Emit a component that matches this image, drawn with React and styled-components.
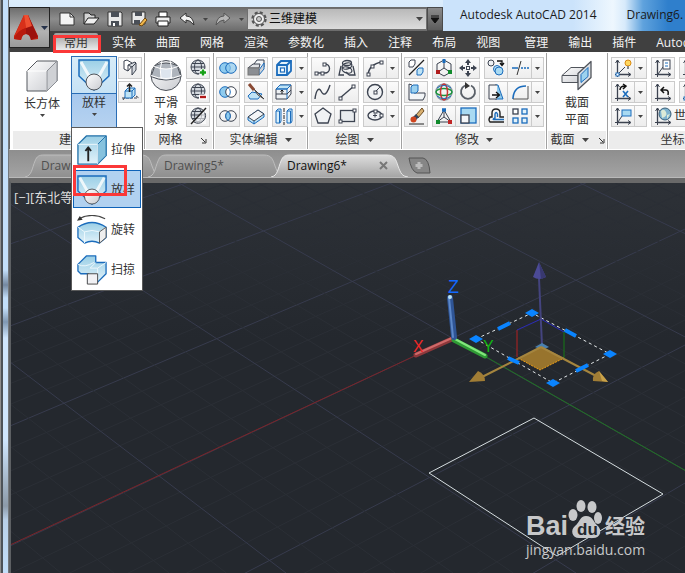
import React, { useState } from 'react'
import styled, { createGlobalStyle } from 'styled-components'

const GlobalStyle = createGlobalStyle`
* { box-sizing: border-box; }
body {
  margin: 0;
  overflow: hidden;
  font-family: "Open Sans", "Noto Sans CJK SC", sans-serif;
  font-size: 12px;
  line-height: 16px;
  color: #333;
}
button, select {
  font: inherit;
  color: inherit;
  margin: 0;
  padding: 0;
  border: 0;
  background: none;
}
svg { display: block; }
`;

const Window = styled.div`
  min-height: 100vh;
  display: flex;
  flex-direction: column;
  padding-left: 9px;
  overflow: hidden;
  background:
    linear-gradient(90deg, #8d8d8d 0 1px, #4c5258 1px 3px, transparent 3px 8px, #74787c 8px) 0 0 / 9px 100% no-repeat,
    linear-gradient(#c3dffa 0 270px, #7488a0 285px, #c3dffa 298px, #c3dffa 308px, #8098b2 322px, #cfe6fd 338px, #cfe6fd 440px, #8c9aa9 506px, #b9d0e8 520px, #c3dffa 100%);
`;

const TopArea = styled.header`
  display: flex;
  flex-direction: column;
  background: linear-gradient(#dcedfc 0, #cbe3fb 31px, #cbe3fb 31px);
  position: relative;
`;

const TitleRow = styled.div`
  display: flex;
  height: 31px;
  padding-top: 7px;
  padding-left: 41px;
`;

const AppButton = styled.button`
  position: absolute;
  left: 0;
  top: 7px;
  width: 41px;
  height: 41px;
  border: 1px solid #222;
  background: linear-gradient(#6e6e6e, #b2b2b2 60%, #9a9a9a);
  display: flex;
  align-items: center;
  gap: 2px;
  padding-left: 4px;
  z-index: 2;
`;

const QuickBar = styled.div`
  display: flex;
  flex: none;
  align-items: center;
  height: 24px;
  padding-left: 5px;
  background: linear-gradient(#6a6a6a, #8d8d8d 50%, #6b6b6b);
`;

const QuickButton = styled.button`
  width: ${p => p.$narrow ? 12 : 24}px;
  height: 22px;
  display: flex;
  align-items: center;
  justify-content: center;
`;

const Workspace = styled.label`
  display: flex;
  align-items: center;
  width: 180px;
  height: 22px;
  padding: 0 3px 0 3px;
  gap: 2px;
  border: 1px solid #707070;
  background: linear-gradient(#b9b9b9, #dcdcdc);
  color: #111;

  select {
    flex: 1;
    appearance: none;
    outline: none;
    height: 20px;
  }
`;

const MoreButton = styled.button`
  width: 16px;
  height: 24px;
  display: flex;
  align-items: center;
  justify-content: center;
  border: 1px solid #4a4a4a;
  background: linear-gradient(#8a8a8a, #5c5c5c);
`;

const Caption = styled.div`
  flex: 1;
  display: flex;
  gap: 30px;
  height: 31px;
  margin-top: -7px;
  padding: 7px 0 0 17px;
  white-space: nowrap;
  overflow: hidden;
  color: #1b1b1b;
  background: linear-gradient(90deg, #cbe3fb 0 130px, #eef7fe 170px, #d7eafb 182px, #5fa2dd 200px, #2f7fcc 225px);
`;

const TabRow = styled.nav`
  display: flex;
  align-items: flex-end;
  height: 21px;
  padding-left: 45px;
  background: #404040;
  white-space: nowrap;
`;

const RibbonTab = styled.button`
  position: relative;
  flex: none;
  height: 19px;
  padding: 0 10px;
  margin-right: ${p => p.$last ? 4 : 0}px;
  border-radius: 2px 2px 0 0;
  color: ${p => p.$active ? '#333' : '#f4f4f4'};
  background: ${p => p.$active ? 'linear-gradient(#9c9c9c, #f4f4f4)' : 'none'};
`;

const Mark = styled.span`
  position: absolute;
  border: 3px solid #fb3838;
  pointer-events: none;
  top: ${p => p.$menu ? -6 : 2}px;
  left: -1px;
  right: ${p => p.$menu ? 13 : -3}px;
  height: ${p => p.$menu ? 31 : 18}px;
`;

const Ribbon = styled.div`
  display: flex;
  padding-left: 2px;
  background: #fff;
  border-left: 1px solid #666;
  border-bottom: 1px solid #fff;
`;

const PanelBox = styled.section`
  display: flex;
  flex-direction: column;
  flex: ${p => p.$grow ? '1 0 auto' : 'none'};
  width: ${p => p.$w}px;
  margin-top: 1px;
  border-right: 1px solid #a2a2a2;
`;

const PanelBody = styled.div`
  display: flex;
  align-items: flex-start;
  gap: ${p => p.$gap || 0}px;
  height: 78px;
  padding: 4px 0 0 ${p => p.$pad || 0}px;
`;

const PanelLabel = styled.div`
  display: flex;
  align-items: center;
  justify-content: center;
  gap: 7px;
  height: 18px;
  margin: 0 1px;
  padding-left: ${p => p.$indent || 0}px;
  white-space: nowrap;
  background: #ececec;
`;

const Launcher = styled.button`
  width: 8px;
  height: 8px;
  margin-left: ${p => p.$far ? 10 : 2}px;
`;

const BigButton = styled.button`
  display: flex;
  flex-direction: column;
  align-items: center;
  width: ${p => p.$w || 46}px;
  height: 71px;
  line-height: 17px;
  gap: 2px;
  padding-top: 2px;
`;

const LoftAnchor = styled.div`
  position: relative;
  width: 46px;
  margin-top: -1px;
`;

const LoftButton = styled(BigButton)`
  height: 73px;
  padding-top: 1px;
  border: 1px solid #2a6db5;
  border-bottom: 0;
  background: linear-gradient(#d7ecf8 0, #c6e2f5 36px, #2a6db5 36px, #2a6db5 37px, #a6c8ee 37px, #b7d3f0);
`;

const Menu = styled.div`
  position: absolute;
  z-index: 5;
  top: 71px;
  left: 0;
  width: 72px;
  display: flex;
  flex-direction: column;
  gap: 2px;
  padding: 2px 1px;
  background: #fff;
  border: 1px solid #5a5a5a;
`;

const MenuItem = styled.button`
  position: relative;
  display: flex;
  align-items: center;
  height: 38px;
  padding: 1px 0 0 3px;
  gap: 4px;
  white-space: nowrap;
  border: 1px solid ${p => p.$active ? '#0e62b8' : 'transparent'};
  background: ${p => p.$active ? '#b1d1f0' : 'none'};
`;

const Column = styled.div`
  display: flex;
  flex-direction: column;
  gap: 2px;
`;

const PanelRow = styled.div`
  display: flex;
  gap: 4px;
`;

const Group = styled.div`
  display: flex;
  height: 22px;
  border: 1px solid #cbcbcb;
  background: linear-gradient(#fbfbfb, #ededed);
`;

const toolWidth = (p) => {
  if (p.$drop) return 12
  return p.$divided ? 24 : 22
}

const Tool = styled.button`
  display: flex;
  flex: none;
  align-items: center;
  justify-content: center;
  width: ${toolWidth}px;
  height: 20px;
  border-left: ${p => p.$divided ? '1px solid #cbcbcb' : '0'};
`;

const WorldTool = styled.button`
  display: flex;
  flex: none;
  align-items: center;
  width: 90px;
  height: 20px;
`;

const FileTabs = styled.div`
  display: flex;
  align-items: flex-end;
  height: 28px;
  padding-left: 16px;
  background: linear-gradient(#8e8e8e, #a3a3a3);
  border-bottom: 1px solid #b9b9b9;
`;

const FileTab = styled.div`
  position: relative;
  flex: none;
  display: flex;
  align-items: center;
  justify-content: space-between;
  width: 137px;
  height: 23px;
  margin-right: -14px;
  padding: 0 20px 0 16px;
  z-index: ${p => p.$active ? 1 : 0};
  color: ${p => p.$active ? '#111' : '#505050'};

  > svg:first-child { position: absolute; inset: 0; }
  button { position: relative; }
`;

const FileName = styled.span`
  position: relative;
`;

const NewTab = styled.button`
  margin: 0 0 3px 14px;
`;

const Viewport = styled.main`
  position: relative;
  flex: 1;
  min-height: 390px;
  border-top: 5px solid #696969;
  border-left: 2px solid #5d6063;
  background: linear-gradient(#2d3137, #24282e 40%, #24282e);
  overflow: hidden;
`;

const Scene = styled.svg`
  position: absolute;
  inset: 0;
  width: 100%;
  height: 100%;
`;

const ViewLabel = styled.button`
  position: relative;
  padding: 6px 3px;
  color: #dcdcdc;
  font-size: 13px;
`;

const Watermark = styled.div`
  position: absolute;
  right: 35px;
  bottom: 13px;
  width: 124px;
  color: #c7c8ca;
`;

const Brand = styled.div`
  display: flex;
  align-items: flex-end;
  font: bold 27px/28px "Liberation Sans", sans-serif;

  b {
    font: bold 20px/28px "Noto Sans CJK SC", sans-serif;
    margin-left: 3px;
  }
`;

const Site = styled.div`
  font: 14px/20px "Open Sans", sans-serif;
`;

const D = '#3c4350'
const B = '#1b6cbc'
const L = '#bfe3f5'

const Arrow = ({ c = '#444' }) => (
  <svg width="7" height="4"><path d="M0 0H7L3.5 4Z" fill={c} /></svg>
)

const ToolArrow = () => (
  <svg width="5" height="3"><path d="M0 0H5L2.5 3Z" fill="#444" /></svg>
)

const Node = ({ x, y, c = D }) => <rect x={x - 1} y={y - 1} width="3" height="3" fill="#fff" stroke={c} />

const Globe = () => (
  <g fill="none" stroke={D}>
    <circle cx="11" cy="9" r="7" fill="#d5dae0" />
    <path d="M4 9H18M5 5.500H17M5 12.500H17" />
    <ellipse cx="11" cy="9" rx="3.500" ry="7" />
  </g>
)

const Axes = () => (
  <g stroke={D} fill="none">
    <path d="M5.500 2V16.500H18" strokeWidth="1.300" />
    <path d="M3.500 5L5.500 2L7.500 5M16 14.500L19 16.500L16 18.500M3 16.500H5.500V19" />
  </g>
)

const icons = {
  polysolid: <g stroke={D} fill="#d5d9de" strokeLinejoin="round"><path d="M5 3L8 2L13 5V8L9 13L5 11Z" fill="#fff" /><path d="M9 7L16 4L17 5V12L13 17V9Z" /><path d="M13 9L17 5M9 7V13" /></g>,
  press: <g><path d="M3 16H19M17 14L20 16M4 18L8 12" stroke={D} strokeDasharray="3 1" /><path d="M6 9L9 6H16V13L13 16H6Z" fill={L} stroke={B} /><path d="M6 9H13V16M13 9L16 6" stroke={B} fill="none" /><path d="M10.500 10V2M8 4.500L10.500 2L13 4.500" stroke="#222" strokeWidth="1.500" fill="none" /></g>,
  meshPlus: <g><Globe /><path d="M12.500 14.500H19.500M16 11V18" stroke="#fff" strokeWidth="5" /><path d="M13 14.500H19M16 11.500V17.500" stroke="#16a016" strokeWidth="2.400" /></g>,
  meshMinus: <g><Globe /><path d="M12 15H20" stroke="#fff" strokeWidth="5" /><path d="M13 15H19" stroke="#b01818" strokeWidth="2.400" /></g>,
  meshCut: <g><Globe /><path d="M4 18L19 2V18Z" fill="#fff" opacity=".6" /><path d="M18 7A7.500 7.500 0 0 1 7 16" stroke={D} fill="none" /><path d="M4 18L19 2" stroke="#222" strokeWidth="1.400" /></g>,
  union: <g stroke={B} fill="#8fcbee"><circle cx="8" cy="10" r="5.300" /><circle cx="14" cy="10" r="5.300" fillOpacity=".7" /></g>,
  subtract: <g><circle cx="8" cy="10" r="5.300" fill="#8fcbee" stroke={B} /><circle cx="14" cy="10" r="5.300" fill="#fff" stroke={D} /><path d="M11 5.600A5.300 5.300 0 0 1 11 14.400" stroke={B} fill="none" /></g>,
  intersect: <g stroke={D} fill="none"><circle cx="8" cy="10" r="5.300" /><circle cx="14" cy="10" r="5.300" /><path d="M11 5.600A5.300 5.300 0 0 1 11 14.400A5.300 5.300 0 0 1 11 5.600" fill="#8fcbee" stroke={B} /></g>,
  extrudeFace: <g stroke={D}><path d="M9 6L12 2H19V9L15 12H9Z" fill="#f2f5f8" /><path d="M14 12L19 5V11L14 17Z" fill="#cfd3d8" stroke={B} /><path d="M3 10L8 6H15L14 10Z" fill="#e0e2e5" /><rect x="3" y="10" width="11" height="7" fill="#8b8e93" stroke="#777" /></g>,
  slice: <g><path d="M3 14L7 10L17 12L13 17H5Z" fill={L} stroke={B} /><path d="M9 7L19 17L13 13Z" fill="#d7dade" stroke="#444" /><path d="M4 2L9 8" stroke="#8a4a34" strokeWidth="3" /></g>,
  thicken: <g stroke={B} strokeLinejoin="round"><path d="M3 11L13 4L19 8V11L9 18L3 14Z" fill={L} /><path d="M3 11L13 4L19 8L9 15Z" fill="#f3f5f7" stroke={D} /><path d="M9 15V18" /></g>,
  shell: <g stroke={B} fill="none" strokeWidth="1.800"><path d="M4 7L8 3H18V13L14 17H4Z" fill="#e4f3fb" /><path d="M4 7H14V17M14 7L18 3" /><rect x="7.500" y="10" width="4" height="4" strokeWidth="1.200" fill="#fff" /></g>,
  imprint: <g stroke={D}><path d="M3 7L7 3H18V12L14 17H3Z" fill="#eef1f4" /><path d="M3 7L7 3H18L14 7Z" fill={L} stroke={B} /><path d="M3 7H14V17M14 7L18 3" fill="none" stroke={B} /><path d="M3 12H14L18 8" fill="none" /><path d="M9 12V8M7.500 9.500L9 8L10.500 9.500" stroke="#111" fill="none" /></g>,
  mirror3d: <g stroke={B} fill="#d9effa"><path d="M3 5L5 3H8V15L7 17H3Z" /><path d="M14 5L16 3H19V15L18 17H14Z" /><path d="M3 5H6.500V17M14 5H17.500V17" fill="none" /><path d="M11 2V19" stroke="#222" strokeDasharray="4 1 1 1" /></g>,
  polyline: <g stroke={D} fill="none"><path d="M4 15H10M12 6H13A4.500 4.500 0 0 1 13 15H10" strokeWidth="1.400" /><Node x="4" y="15" /><Node x="10" y="15" /><Node x="12" y="6" /></g>,
  helix: <g stroke={D} fill="none" strokeWidth="1.300"><ellipse cx="11" cy="5" rx="4.500" ry="2.500" /><ellipse cx="11" cy="8" rx="5" ry="3" transform="rotate(-15 11 8)" /><ellipse cx="11" cy="12" rx="5" ry="3" transform="rotate(15 11 12)" /><path d="M5 8L3 17H8M17 8L19 17H13M10 14L13 17" /></g>,
  arc: <g stroke={D} fill="none"><path d="M4 17Q5 6 18 4" strokeWidth="1.400" /><Node x="4" y="16" /><Node x="8" y="8" /><Node x="17" y="4" /></g>,
  spline: <path d="M3 17C4 8 7 5 9 9C12 15 15 12 18 3" stroke={D} fill="none" strokeWidth="1.400" />,
  line: <g stroke={D} fill="none"><path d="M4 16L18 4" strokeWidth="1.400" /><Node x="4" y="16" /><Node x="17" y="4" /></g>,
  circle: <g stroke={D} fill="none"><circle cx="11" cy="10" r="7.500" strokeWidth="1.400" fill="#f1f3f5" /><path d="M11 10L16 5" /><Node x="11" y="10" /></g>,
  polygon: <path d="M11 2L19 8L16 17H6L3 8Z" fill="#f0f2f4" stroke={D} strokeWidth="1.300" />,
  rect: <g stroke={D}><rect x="4.500" y="4.500" width="14" height="11" fill="#e8ebee" strokeWidth="1.300" /><Node x="4" y="15" /><Node x="18" y="4" /></g>,
  ellipse: <g stroke={D} fill="none"><ellipse cx="11" cy="9.500" rx="7" ry="4.500" strokeWidth="1.400" fill="#f1f3f5" /><path d="M9 9.500H13M11 7.500V11.500" /><Node x="11" y="5" /><Node x="17" y="9" /></g>,
  move3d: <g><path d="M4 4L6 2H10V6L8 9H4Z" fill="#fff" stroke={D} /><path d="M4 17L19 2" stroke="#222" strokeWidth="1.300" /><path d="M12 12L14 10H18V14L16 17H12Z" fill={L} stroke={B} /></g>,
  align: <g><path d="M4 2V18H18L20 14V11H9V6L7 3Z" fill="#f2f5f7" stroke={D} /><path d="M6 5L8 3H13V9L11 11H6Z" fill="#9bd1ef" stroke={B} /></g>,
  erase: <g><path d="M11 9L17 2L19 5L13 12Z" fill="#d9b070" stroke="#6a4b22" /><path d="M8 11L11 8L14 11L11 14Z" fill="#35445c" /><circle cx="8.500" cy="13.500" r="3" fill="#d0451f" /><path d="M4 18H19" stroke="#222" /></g>,
  gizmoMove: <g fill="none" stroke={D}><path d="M11 2L18 6V14L11 18L4 14V6Z" /><path d="M11 10V3M11 10L5 14M11 10L17 14" /><path d="M11 1V5" stroke={B} strokeWidth="3" /><path d="M3 14H7" stroke="#b01c1c" strokeWidth="4" /><path d="M15 14H19" stroke="#118a2c" strokeWidth="4" /></g>,
  gizmoRotate: <g fill="none" strokeWidth="1.500"><circle cx="11" cy="10" r="8" stroke="#8a98a4" /><ellipse cx="11" cy="10" rx="8" ry="3.500" stroke="#19933b" /><ellipse cx="11" cy="10" rx="3.500" ry="8" stroke="#c93434" /><path d="M4 6Q11 1 18 6M4 14Q11 19 18 14" stroke={B} strokeWidth="1" /></g>,
  gizmoScale: <g fill="none" stroke={D}><path d="M11 4L4 16H18Z" /><path d="M11 4V11L4 16M11 11L18 16" /><path d="M9 4H13" stroke={B} strokeWidth="3.500" /><path d="M3 16H7" stroke="#118a2c" strokeWidth="4" /><path d="M15 16H19" stroke="#c02626" strokeWidth="4" /></g>,
  move: <g fill={D}><path d="M11 1L14 5H8ZM11 19L14 15H8ZM2 10L6 7V13ZM20 10L16 7V13Z" /><path d="M11 5V7M11 13V15M6 10H8M14 10H16" stroke={D} strokeWidth="2" /><rect x="9.500" y="8.500" width="3" height="3" fill="#fff" stroke={D} /></g>,
  rotate: <g><path d="M8 3.500A7 7 0 1 0 14 3.500" fill="none" stroke="#5a6068" strokeWidth="1.800" /><path d="M8 0L13 4L8 7Z" fill="#333" /></g>,
  scale: <g><rect x="4" y="2" width="15" height="15" fill="#a9daf2" stroke={B} strokeWidth="1.300" /><rect x="4" y="9" width="8" height="8" fill="#f5f7f9" stroke={D} strokeWidth="1.300" /></g>,
  copy: <g fill="#eef1f4" stroke={D}><circle cx="6" cy="5" r="3" /><circle cx="12" cy="11" r="3.500" stroke={B} fill={L} /><circle cx="14" cy="13" r="4" stroke={B} fill="#a9daf2" /><path d="M12 3H17V7M15 5L17 7.500L19 5" fill="none" stroke="#111" strokeWidth="1.300" /></g>,
  trim: <g fill="none"><path d="M3 10H9" stroke={B} strokeWidth="1.500" /><path d="M12 10H20" stroke={B} strokeDasharray="2 1" strokeWidth="1.500" /><path d="M8 17L12 3" stroke="#333" /></g>,
  stretch: <g><path d="M10 3H13L18 17H10Z" fill="#8fcbee" stroke={B} /><path d="M12 3H4V17H12" fill="#f7f7f7" stroke={D} /><path d="M7 13H14M11 10L14.500 13L11 16" stroke="#111" strokeWidth="1.300" fill="none" /></g>,
  fillet: <g fill="none"><path d="M4 17V16Q5 4 17 4" stroke={B} strokeWidth="1.600" /><path d="M4 17H19V4" stroke="#555" /></g>,
  offset: <g fill="none" strokeWidth="1.400"><path d="M19 11H15V7Q15 3 11 3Q7 3 7 7V11H5Q3 14 5 16H19" stroke="#222" /><path d="M19 13.500H9Q7 13.500 10 12V8Q11 5 12.500 8V11" stroke={B} /></g>,
  array: <g strokeWidth="1.300"><rect x="4" y="3" width="5" height="5" fill="#fff" stroke={D} /><rect x="13" y="3" width="5" height="5" fill="#e3f2fa" stroke={B} /><rect x="4" y="12" width="5" height="5" fill="#e3f2fa" stroke={B} /><rect x="13" y="12" width="5" height="5" fill="#e3f2fa" stroke={B} /></g>,
  ucsLight: <g><Axes /><path d="M6 16L13 9" stroke={D} /><circle cx="16" cy="5" r="3" fill="#ffd75e" stroke="#d98a13" /><path d="M15 8H17V11H15Z" fill="#888" /><Node x="5" y="16" c={B} /></g>,
  ucsX: <g><Axes /><path d="M8 8Q8 4 13 4M11 2L14 4L11 7" stroke="#111" fill="none" strokeWidth="1.500" /><path d="M11 9L16 15M16 9L11 15" stroke={B} strokeWidth="1.600" /></g>,
  ucsView: <g><Axes /><path d="M6 16L10 10" stroke={D} /><rect x="10" y="4" width="9" height="6" fill="#a9daf2" stroke={B} /></g>,
  ucsNamed: <g><Axes /><path d="M6 16L11 9" stroke={D} /><rect x="11" y="2" width="7" height="9" fill="#fff" stroke={D} /><path d="M13 5H16M13 8H16" stroke={B} /></g>,
  ucsPrev: <g><Axes /><path d="M9 8H14Q17 8 16 13M12 5L9 8L12 11" stroke="#111" fill="none" strokeWidth="1.500" /></g>,
  ucs: <Axes />,
  ucsOrigin: <g><Axes /><Node x="5" y="16" c={B} /></g>,
  world: <g><Axes /><circle cx="13" cy="8" r="6" fill="#7fb3cf" stroke="#3a5f78" /><path d="M9 5Q12 2 14 6T10 12ZM15 9L18 8L15 13Z" fill="#dcebd8" /></g>,
}

const Icon = ({ name }) => <svg width="22" height="20" viewBox="0 0 22 20">{icons[name]}</svg>

const gradients = (
  <defs>
    <linearGradient id="sky" x1="0" y1="0" x2="0" y2="1"><stop offset="0" stopColor="#9bcfe6" /><stop offset="1" stopColor="#e3f3fa" /></linearGradient>
    <linearGradient id="metal" x1="0" y1="0" x2="1" y2="1"><stop offset="0" stopColor="#fff" /><stop offset="1" stopColor="#c9cbd0" /></linearGradient>
  </defs>
)

const bigIcons = {
  box: <g stroke="#55585e" strokeLinejoin="round" fill="url(#metal)"><path d="M1 11L11 1H31V21L21 31H1Z" /><path d="M1 11H21V31M21 11L31 1" fill="none" stroke="#fff" /><path d="M21 11L31 1V21L21 31Z" fill="#cfd1d5" stroke="#8a8d93" /></g>,
  loft: <g><path d="M1 1H31V17L16 31L1 17Z" fill="url(#sky)" stroke={B} strokeWidth="1.500" /><path d="M3 3L11 17M29 3L21 17" stroke="#fff" strokeWidth="3" opacity=".8" /><circle cx="16" cy="23" r="8" fill="url(#metal)" stroke="#50545a" /></g>,
  extrude: <g stroke="#1f6fa8" strokeLinejoin="round"><path d="M1 10L10 1H31V22L22 31H1Z" fill="url(#sky)" strokeWidth="1.400" /><path d="M22 10L31 1V22L22 31Z" fill="#86c2de" /><path d="M1 10H22V31" fill="none" stroke="#eef8fc" /><path d="M12 28V14M9 17L12 13L15 17" stroke="#222" strokeWidth="2" fill="none" /></g>,
  revolve: <g strokeLinejoin="round"><path d="M2 4Q16 -3 30 4" fill="none" stroke="#444" strokeWidth="1.300" /><path d="M0 6L3 1L6 5Z" fill="#333" /><path d="M1 13Q16 3 31 13V24L24 30Q16 26 8 30L1 24Z" fill="url(#sky)" stroke={B} strokeWidth="1.400" /><path d="M1 13L8 18Q16 15 24 18L31 13M8 18V30M24 18V30" fill="none" stroke="#eef8fc" /><path d="M24 18L31 13V24L24 30Z" fill="#eee" stroke="#555" /></g>,
  sweep: <g stroke={B} strokeLinejoin="round"><path d="M1 10L10 1H20V8H31V20L21 30H12V20H4L1 17Z" fill="url(#sky)" strokeWidth="1.400" /><path d="M20 8L14 14H22L31 8M1 10Q8 14 18 8M22 14V20" fill="none" stroke="#eef8fc" /><rect x="11" y="20" width="11" height="11" fill="#f1f1f4" stroke="#444" /></g>,
  smooth: <g stroke="#4c5159" fill="none"><circle cx="16" cy="16" r="15" fill="url(#metal)" /><path d="M5 6Q16 1 27 6L31 17Q16 24 1 17Z" fill="#aeb4bc" /><path d="M11 9Q16 10 21 9L22 19Q16 21 11 19Z" fill="#dde5ee" stroke="none" /><path d="M1 16Q16 22 31 16M4 7Q16 12 28 7" stroke="#fff" /><path d="M12 1Q9 9 11 19M20 1Q23 9 21 19" stroke="#fff" /></g>,
  section: <g stroke="#50545b" strokeLinejoin="round"><path d="M1 16L10 8H24V16L17 23H1Z" fill="url(#metal)" /><path d="M1 16H17V23M17 16L24 8" fill="none" /><path d="M17 14L30 2V18L17 30Z" fill="#dde1e6" strokeWidth="1.300" /><path d="M20 15L27 8V17L20 23Z" fill="#9dd2ee" stroke={B} /></g>,
}

const BigIcon = ({ name }) => <svg width="32" height="34" viewBox="0 0 32 32">{gradients}{bigIcons[name]}</svg>

const quick = [
  ['新建', <g key="n"><path d="M1 2H11L15 6V14H1Z" fill="#f3f3f3" stroke="#333" /><path d="M11 2V6H15" fill="none" stroke="#333" /></g>],
  ['打开', <g key="o"><path d="M1 13V2H6L8 4H12V7" fill="#d5d5d5" stroke="#222" /><path d="M1 13L5 7H16L11 13Z" fill="#efefef" stroke="#222" /></g>],
  ['保存', <g key="s"><path d="M1 1H14L15 2V15H1Z" fill="#e8e8e8" stroke="#333" /><path d="M4 1H12V6H4ZM4 10H12V15H4Z" fill="#4a4f57" /><path d="M6 12H8V15H6Z" fill="#fff" /></g>],
  ['另存为', <g key="a"><path d="M1 1H14V13H1Z" fill="#e8e8e8" stroke="#333" /><path d="M4 1H11V5H4ZM3 9H9V13H3Z" fill="#4a4f57" /><path d="M8 14L14 7L16 9L11 15Z" fill="#f0b64a" stroke="#6b4510" /></g>],
  ['打印', <g key="p"><path d="M4 1H12V6H4Z" fill="#fff" stroke="#222" /><path d="M1 6H15V12H1Z" fill="#ededed" stroke="#222" /><path d="M3 10H13V15H3Z" fill="#fff" stroke="#222" /></g>],
  ['放弃', <path key="u" d="M1 7L7 2V5Q14 5 15 14Q11 9 7 9V12Z" fill="#f3f3f3" stroke="#333" />],
]

const tabs = ['常用', '实体', '曲面', '网格', '渲染', '参数化', '插入', '注释', '布局', '视图', '管理', '输出', '插件', 'Autodesk 360']
const lofts = [['extrude', '拉伸'], ['loft', '放样'], ['revolve', '旋转'], ['sweep', '扫掠']]

// each row is a list of tools; the "v" entry is the drop-down arrow
const Tools = ({ rows }) => (
  <Column>
    {rows.map((row) => (
      <Group key={row.join()}>
        {row.map((name, i) => (
          <Tool key={name} aria-label={name} $drop={name === 'v'} $divided={i > 0}>
            {name === 'v' ? <ToolArrow /> : <Icon name={name} />}
          </Tool>
        ))}
      </Group>
    ))}
  </Column>
)

const Panel = ({ w, pad, gap, label, indent, drop, launch, grow, children }) => (
  <PanelBox $w={w} $grow={grow}>
    <PanelBody $pad={pad} $gap={gap}>{children}</PanelBody>
    <PanelLabel $indent={indent}>
      {label}
      {drop && <Arrow />}
      {launch && (
        <Launcher aria-label={label} $far={!drop}>
          <svg width="7" height="7"><path d="M1 1L5 5M6 2V6H2" stroke="#333" fill="none" /></svg>
        </Launcher>
      )}
    </PanelLabel>
  </PanelBox>
)

// major lines: [y at left edge, y at right edge] and [x at top, x at bottom]
const xLines = [[115, -100], [174, -48], [244, 10], [326, 73], [426, 141], [546, 229], [695, 345], [884, 483], [1120, 650]]
const yLines = [[-700, -260], [-450, 10], [-224, 286], [-22, 576], [179, 866], [389, 1139], [580, 1390], [770, 1640]]

const between = (lines, draw) => lines.slice(1).flatMap((to, i) => {
  const from = lines[i]
  return [0, 1, 2, 3, 4].map((k) => {
    const t = (Math.pow(1.04, k) - 1) / (Math.pow(1.04, 5) - 1)
    return draw(from[0] + (to[0] - from[0]) * t, from[1] + (to[1] - from[1]) * t, k === 0, `${i}-${k}`)
  })
})

const Drawing = () => (
  <Scene viewBox="11 183 674 390" preserveAspectRatio="xMinYMin slice">
    <g>
      {between(xLines, (a, b, major, key) => <path key={key} d={`M10 ${a}L685 ${b}`} stroke={major ? '#373b4d' : '#2b2f36'} />)}
      {between(yLines, (a, b, major, key) => <path key={key} d={`M${a} 183L${b} 573`} stroke={major ? '#373b4d' : '#2b2f36'} />)}
    </g>
    <path d="M10 545L453 338" stroke="#7c2429" />
    <path d="M453 338L700 479" stroke="#1f7322" />
    <path d="M429 473L534 418L663 494L557 556Z" fill="none" stroke="#d5dde0" />
    <g strokeLinecap="round">
      <path d="M416 355L452 339" stroke="#8e383b" strokeWidth="5" />
      <path d="M416 354L452 338" stroke="#d06a6a" strokeWidth="2" />
      <path d="M454 340L485 356" stroke="#2f9a35" strokeWidth="5" />
      <path d="M455 339L485 355" stroke="#82e57c" strokeWidth="2" />
      <path d="M450 298L454 337" stroke="#2f5596" strokeWidth="6" />
      <path d="M449 298L453 337" stroke="#5c87c8" strokeWidth="2" />
      <circle cx="450" cy="297" r="2" fill="#b9e2f5" />
    </g>
    <path d="M476 339L532 313L610 354L553 383Z" fill="none" stroke="#e4e8ea" strokeDasharray="3 3" />
    <g fontFamily="Liberation Sans, sans-serif">
      <text x="448" y="293" fontSize="18" fill="#1268ff">Z</text>
      <text x="413" y="352" fontSize="16" fill="#f02828">X</text>
      <text x="483" y="352" fontSize="16" fill="#10b810">Y</text>
    </g>
    <path d="M517 357V330" stroke="#b52020" />
    <path d="M517 330L541 319L564 332" stroke="#2b2bb8" fill="none" />
    <path d="M564 332V358" stroke="#157a15" />
    <path d="M539 278L542 346" stroke="#44447f" strokeWidth="2" />
    <path d="M539 262L546 277Q539 281 533 277Z" fill="#4b4a96" />
    <path d="M539 262L546 277L541 279Z" fill="#38386f" />
    <path d="M535 347L542 343L549 347L542 350Z" fill="#4a80b0" />
    <path d="M518 358L542 347L564 358L540 370Z" fill="#98742d" />
    <path d="M518 358L540 370L564 358" fill="none" stroke="#f0a015" strokeDasharray="2 1" />
    <path d="M541 347L482 377M541 347L600 378" stroke="#a5853e" strokeWidth="2" />
    <path d="M469 382L478 371Q485 374 485 381Z" fill="#a17d35" />
    <path d="M608 382L599 371Q592 374 593 381Z" fill="#a17d35" />
    <path d="M599 371L608 382L602 381Z" fill="#c9a24a" />
    <g fill="#0a84ff">
      {[[476, 339], [532, 313], [610, 354], [553, 383]].map(([x, y]) => (
        <path key={x} d={`M${x - 7} ${y}L${x} ${y - 4}L${x + 7} ${y}L${x} ${y + 4}Z`} />
      ))}
    </g>
    <path d="M498 329L510 323M576 371L588 365M565 330L576 336M508 358L519 363" stroke="#0a84ff" strokeWidth="4" />
  </Scene>
)

const App = () => {
  const [tab, setTab] = useState('常用')
  const [loft, setLoft] = useState('loft')

  return (
    <>
      <GlobalStyle />
      <Window>
        <TopArea>
          <AppButton aria-label="应用程序菜单">
            <svg width="25" height="27" viewBox="0 0 25 27">
              <path d="M10 1H14L24 22V25L17 26Q16 20 12 20Q8 20 7 26L0 25V22Z" fill="#c2200f" />
              <path d="M10 1L12 14Q5 16 0 23Z" fill="#d8301a" />
              <path d="M12 14Q4 16 0 25L7 26Q8 20 12 20Z" fill="#b81a0e" />
              <path d="M14 1L24 23L17 26Q16 20 12 20V14Z" fill="#9c120e" />
              <path d="M12 14L10 1H14L18 12Z" fill="#ee4f31" />
            </svg>
            <Arrow c="#26324a" />
          </AppButton>
          <TitleRow>
            <QuickBar>
              {quick.map(([name, art]) => (
                <QuickButton key={name} aria-label={name}>
                  <svg width="17" height="16">{art}</svg>
                </QuickButton>
              ))}
              <QuickButton $narrow aria-label="放弃列表"><ToolArrow /></QuickButton>
              <QuickButton aria-label="重做">
                <svg width="17" height="16"><path d="M15 7L9 2V5Q2 5 1 14Q5 9 9 9V12Z" fill="#b5b5b5" stroke="#555" /></svg>
              </QuickButton>
              <QuickButton $narrow aria-label="重做列表"><ToolArrow /></QuickButton>
              <Workspace>
                <svg width="16" height="16" viewBox="0 0 16 16" fill="none" stroke="#555">
                  <circle cx="8" cy="8" r="6.500" strokeWidth="2.400" strokeDasharray="3 2.100" />
                  <circle cx="8" cy="8" r="5.500" fill="#eee" />
                  <circle cx="8" cy="8" r="2.500" fill="#c8c8c8" />
                </svg>
                <select aria-label="工作空间"><option>三维建模</option></select>
                <Arrow />
              </Workspace>
              <MoreButton aria-label="自定义">
                <svg width="8" height="8"><path d="M0 1H8M0 3H8L4 8Z" stroke="#111" fill="#111" /></svg>
              </MoreButton>
            </QuickBar>
            <Caption>
              <span>Autodesk AutoCAD 2014</span>
              <span>Drawing6.</span>
            </Caption>
          </TitleRow>
          <TabRow>
            {tabs.map((name) => (
              <RibbonTab key={name} $active={tab === name} $last={name === '常用' || name === '视图'} onClick={() => setTab(name)}>
                {name}
                {name === '常用' && <Mark />}
              </RibbonTab>
            ))}
          </TabRow>
        </TopArea>

        <Ribbon>
          <Panel w={133} pad={2} gap={1} label="建模" drop>
            <BigButton $w={56}><BigIcon name="box" />长方体<ToolArrow /></BigButton>
            <LoftAnchor>
              <LoftButton><BigIcon name="loft" />放样<ToolArrow /></LoftButton>
              <Menu role="menu">
                {lofts.map(([id, name]) => (
                  <MenuItem key={id} role="menuitem" $active={loft === id} onClick={() => setLoft(id)}>
                    <svg width="30" height="30" viewBox="0 0 32 32">{bigIcons[id]}</svg>
                    {name}
                    {id === 'loft' && <Mark $menu />}
                  </MenuItem>
                ))}
              </Menu>
            </LoftAnchor>
            <Tools rows={[['polysolid'], ['press']]} />
          </Panel>
          <Panel w={69} pad={5} gap={4} label="网格" indent={8} launch>
            <BigButton $w={32}><BigIcon name="smooth" />平滑<br />对象</BigButton>
            <Tools rows={[['meshPlus'], ['meshMinus'], ['meshCut']]} />
          </Panel>
          <Panel w={94} pad={2} gap={4} label="实体编辑" drop>
            <Tools rows={[['union'], ['subtract'], ['intersect']]} />
            <Tools rows={[['extrudeFace'], ['slice'], ['thicken']]} />
            <Tools rows={[['shell', 'v'], ['imprint', 'v'], ['mirror3d', 'v']]} />
          </Panel>
          <Panel w={94} pad={3} gap={4} label="绘图" drop>
            <Tools rows={[['polyline', 'helix'], ['spline', 'line'], ['polygon', 'rect']]} />
            <Tools rows={[['arc', 'v'], ['circle', 'v'], ['ellipse', 'v']]} />
          </Panel>
          <Panel w={145} pad={2} gap={4} label="修改" drop>
            <Tools rows={[['move3d'], ['align'], ['erase']]} />
            <Tools rows={[['gizmoMove', 'move'], ['gizmoRotate', 'rotate'], ['gizmoScale', 'scale']]} />
            <Tools rows={[['copy', 'trim', 'v'], ['stretch', 'fillet', 'v'], ['offset', 'array', 'v']]} />
          </Panel>
          <Panel w={61} pad={7} label="截面" indent={2} drop launch>
            <BigButton><BigIcon name="section" />截面<br />平面</BigButton>
          </Panel>
          <Panel w={144} pad={3} gap={4} label="坐标" drop grow>
            <Tools rows={[['ucsLight', 'v'], ['ucsX', 'v'], ['ucsView', 'v']]} />
            <Column>
              <PanelRow>
                <Tools rows={[['ucsNamed'], ['ucsPrev']]} />
                <Tools rows={[['ucs'], ['ucsOrigin']]} />
              </PanelRow>
              <Group><WorldTool><Icon name="world" />世界</WorldTool></Group>
            </Column>
          </Panel>
        </Ribbon>

        <FileTabs>
          {['Drawing4*', 'Drawing5*', 'Drawing6*'].map((name, i) => (
            <FileTab key={name} $active={i === 2}>
              <svg width="137" height="23" viewBox="0 0 137 23">
                <linearGradient id={`tab${i}`} x1="0" y1="0" x2="0" y2="1">
                  <stop offset="0" stopColor={i === 2 ? '#dedede' : '#a9a9a9'} />
                  <stop offset="1" stopColor={i === 2 ? '#a5a5a5' : '#8f8f8f'} />
                </linearGradient>
                <path d="M0 23C7 22 7 14 10 7C12 2 14 1 19 1H116C124 1 125 6 127 12C130 20 131 22 137 23" fill={`url(#tab${i})`} stroke={i === 2 ? '#e8e8e8' : '#bdbdbd'} />
              </svg>
              <FileName>{name}</FileName>
              {i === 2 && (
                <button aria-label="关闭"><svg width="9" height="9"><path d="M1 1L8 8M8 1L1 8" stroke="#777" strokeWidth="2" /></svg></button>
              )}
            </FileTab>
          ))}
          <NewTab aria-label="新图形">
            <svg width="23" height="17">
              <path d="M1 1H15Q21 2 22 16H9Q3 14 1 1Z" fill="#868686" stroke="#555" />
              <path d="M11 5V12M7.500 8.500H14.500" stroke="#bbb" strokeWidth="3" />
            </svg>
          </NewTab>
        </FileTabs>

        <Viewport>
          <Drawing />
          <ViewLabel>[−][东北等</ViewLabel>
          <Watermark>
            <Brand>
              <span>Bai</span>
              <svg width="34" height="40" viewBox="0 0 34 40" fill="#c7c8ca">
                <ellipse cx="5" cy="15" rx="4.500" ry="6" />
                <ellipse cx="13" cy="6" rx="4.500" ry="6" />
                <ellipse cx="24" cy="7" rx="4.500" ry="6" />
                <ellipse cx="30" cy="18" rx="4" ry="6" />
                <path d="M18 16C12 16 12 22 7 26C2 30 4 38 11 38C16 38 20 38 25 38C33 38 34 30 30 26C25 22 25 16 18 16Z" />
                <text x="9" y="35" fontSize="17" fontFamily="Liberation Sans, sans-serif" fill="#24282e">du</text>
              </svg>
              <b>经验</b>
            </Brand>
            <Site>jingyan.baidu.com</Site>
          </Watermark>
        </Viewport>
      </Window>
    </>
  )
}

export default App
